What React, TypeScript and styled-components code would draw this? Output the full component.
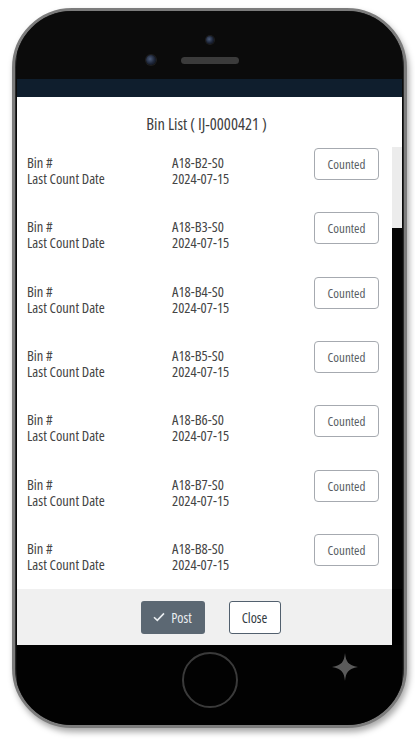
import React from 'react';
import styled, { createGlobalStyle } from 'styled-components';

const GlobalStyle = createGlobalStyle`
    html, body {
        margin: 0;
        padding: 0;
        background: #ffffff;
    }
    body {
        font-family: 'Open Sans', 'DejaVu Sans Condensed', sans-serif;
        font-stretch: 80%;
    }
`;

const Page = styled.div`
    width: 415px;
    height: 741px;
    padding: 8px 0 0 12px;
    box-sizing: border-box;
`;

const Phone = styled.div`
    position: relative;
    width: 395px;
    height: 720px;
    box-sizing: border-box;
    border-radius: 60px;
    background: #0a0a0a;
    border: 3px solid #7c7c7c;
    box-shadow:
        inset 0 0 0 1px #2a2a2a,
        2px 4px 6px rgba(0, 0, 0, 0.35);
    padding: 0 2px;
    display: flex;
    flex-direction: column;
    overflow: hidden;
`;

const TopBezel = styled.div`
    height: 68px;
    display: flex;
    flex-direction: column;
    align-items: center;
    background: #0b0b0b;
`;

const Camera = styled.div<{ $size: number }>`
    width: ${({ $size }) => $size}px;
    height: ${({ $size }) => $size}px;
    border-radius: 50%;
    background: radial-gradient(circle at 40% 40%, #4a5a78 0%, #1c2436 55%, #0d1018 100%);
    box-shadow: 0 0 0 1px #1e1e1e;
`;

const TopCamera = styled(Camera)`
    margin-top: 25px;
`;

const SpeakerRow = styled.div`
    display: flex;
    align-items: center;
    gap: 25px;
    margin-top: 11px;
`;

const Speaker = styled.div`
    width: 58px;
    height: 7px;
    border-radius: 4px;
    background: #3b3b3b;
`;

const Spacer = styled.div`
    width: 10px;
`;

const Screen = styled.div`
    height: 566px;
    display: flex;
    flex-direction: column;
    background: #000;
`;

const NavBar = styled.div`
    height: 18px;
    background: #0f1e2d;
`;

const Body = styled.div`
    flex: 1;
    display: flex;
    min-height: 0;
`;

const Content = styled.div`
    flex: 1;
    background: #ffffff;
    display: flex;
    flex-direction: column;
    overflow: hidden;
`;

const Title = styled.div`
    flex-shrink: 0;
    text-align: center;
    font-size: 16.5px;
    line-height: 20px;
    color: #3d3d3d;
    padding: 17px 0 14px 4px;
`;

const BinRow = styled.div`
    flex-shrink: 0;
    height: 64.33px;
    display: flex;
    align-items: flex-start;
    padding-left: 10px;
    padding-right: 13px;
    box-sizing: border-box;
`;

const Fields = styled.div`
    flex: 1;
    display: grid;
    grid-template-columns: 145px 1fr;
    margin-top: 7px;
`;

const Cell = styled.div`
    font-size: 14.5px;
    line-height: 16px;
    color: #444444;
`;

const CountedButton = styled.button`
    width: 65px;
    height: 32px;
    border: 1px solid #a6aab0;
    border-radius: 4px;
    background: #ffffff;
    color: #585d63;
    font-family: inherit;
    font-stretch: inherit;
    font-size: 13px;
    padding: 0;
`;

const ScrollTrack = styled.div`
    width: 10px;
    display: flex;
    flex-direction: column;
    background: #050505;
`;

const ScrollTop = styled.div`
    height: 50px;
    background: #ffffff;
`;

const ScrollThumb = styled.div`
    height: 81px;
    background: #ececec;
`;

const FooterRow = styled.div`
    height: 56px;
    display: flex;
`;

const Footer = styled.div`
    flex: 1;
    background: #f0f0f0;
    display: flex;
    justify-content: center;
    align-items: center;
    gap: 24px;
    padding-left: 12px;
`;

const FooterGap = styled.div`
    width: 10px;
    background: #000;
`;

const PostButton = styled.button`
    height: 33px;
    width: 64px;
    border: none;
    border-radius: 3px;
    background: #5c6873;
    color: #e9edf0;
    font-family: inherit;
    font-stretch: inherit;
    font-size: 14px;
    display: flex;
    align-items: center;
    justify-content: center;
    gap: 6px;
    padding: 0;
`;

const CloseButton = styled.button`
    height: 33px;
    width: 52px;
    border: 1px solid #52606e;
    border-radius: 3px;
    background: #ffffff;
    color: #333b42;
    font-family: inherit;
    font-stretch: inherit;
    font-size: 14px;
    padding: 0;
`;

const BottomBezel = styled.div`
    flex: 1;
    display: flex;
    justify-content: center;
    padding-top: 7px;
    background: #020202;
`;

const HomeButton = styled.div`
    width: 52px;
    height: 52px;
    border-radius: 50%;
    border: 2px solid #3a3a3a;
`;

const Sparkle = styled.svg`
    position: absolute;
    left: 317px;
    top: 642px;
`;

const bins = ['A18-B2-S0', 'A18-B3-S0', 'A18-B4-S0', 'A18-B5-S0', 'A18-B6-S0', 'A18-B7-S0', 'A18-B8-S0'];

export default function App() {
    return (
        <Page>
            <GlobalStyle />
            <Phone>
                <TopBezel>
                    <TopCamera $size={8} />
                    <SpeakerRow>
                        <Camera $size={10} />
                        <Speaker />
                        <Spacer />
                    </SpeakerRow>
                </TopBezel>
                <Screen>
                    <NavBar />
                    <Body>
                        <Content>
                            <Title>Bin List ( IJ-0000421 )</Title>
                            {bins.map((bin) => (
                                <BinRow key={bin}>
                                    <Fields>
                                        <Cell>Bin #</Cell>
                                        <Cell>{bin}</Cell>
                                        <Cell>Last Count Date</Cell>
                                        <Cell>2024-07-15</Cell>
                                    </Fields>
                                    <CountedButton>Counted</CountedButton>
                                </BinRow>
                            ))}
                        </Content>
                        <ScrollTrack>
                            <ScrollTop />
                            <ScrollThumb />
                        </ScrollTrack>
                    </Body>
                    <FooterRow>
                        <Footer>
                            <PostButton>
                                <svg width="12" height="10" viewBox="0 0 12 10">
                                    <path d="M1 5.2 L4.3 8.4 L11 1.4" fill="none" stroke="#e9edf0" strokeWidth="1.6" />
                                </svg>
                                Post
                            </PostButton>
                            <CloseButton>Close</CloseButton>
                        </Footer>
                        <FooterGap />
                    </FooterRow>
                </Screen>
                <BottomBezel>
                    <HomeButton />
                </BottomBezel>
                <Sparkle width="26" height="28" viewBox="0 0 26 28">
                    <path d="M13 0 C14 9 16 12 26 14 C16 16 14 19 13 28 C12 19 10 16 0 14 C10 12 12 9 13 0 Z" fill="#5a5a5a" />
                </Sparkle>
            </Phone>
        </Page>
    );
}
